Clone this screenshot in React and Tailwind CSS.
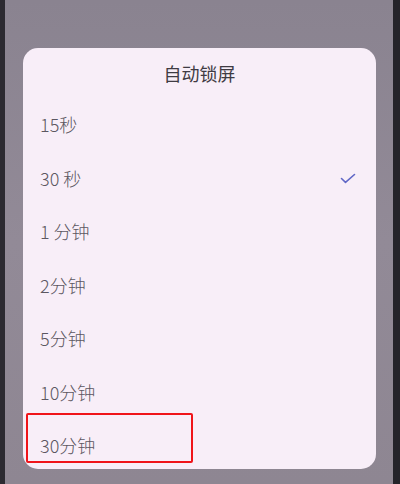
const options = ['15秒', '30 秒', '1 分钟', '2分钟', '5分钟', '10分钟', '30分钟']
const selected = '30 秒'

export default function App() {
  return (
    <div
      className="relative flex h-[484px] w-[400px] overflow-hidden bg-[#8d8592]"
      style={{ fontFamily: '"Noto Sans CJK SC", "Noto Sans", sans-serif' }}
    >
      <div className="w-[5px] bg-[#2c2a31]" />
      <div className="flex-1 bg-gradient-to-b from-[#8a8390] via-[#928a97] to-[#8e8692] pl-[18px] pr-[17px] pt-[48px]">
        <div className="h-[421px] overflow-hidden rounded-[15px] bg-[#f8eef8]">
          <div className="flex h-[50px] items-center justify-center text-[18px] text-[#3f3b43]">自动锁屏</div>
          {options.map(o => (
            <div
              key={o}
              className="flex h-[53.5px] items-center justify-between pl-[17px] pr-[20px] text-[18px] font-light text-[#5c5761]"
            >
              <span>{o}</span>
              {o === selected && (
                <svg width="16" height="11" viewBox="0 0 16 11" fill="none">
                  <path d="M1.5 5.5 L5.5 9.3 L14.5 1.5" stroke="#6067c6" strokeWidth="1.6" strokeLinecap="round" strokeLinejoin="round" />
                </svg>
              )}
            </div>
          ))}
        </div>
      </div>
      <div className="w-[7px] bg-[#25242a]" />
      <div className="absolute left-[26px] top-[413px] h-[50px] w-[167px] rounded-[2px] border-2 border-[#f0141a]" />
    </div>
  )
}
